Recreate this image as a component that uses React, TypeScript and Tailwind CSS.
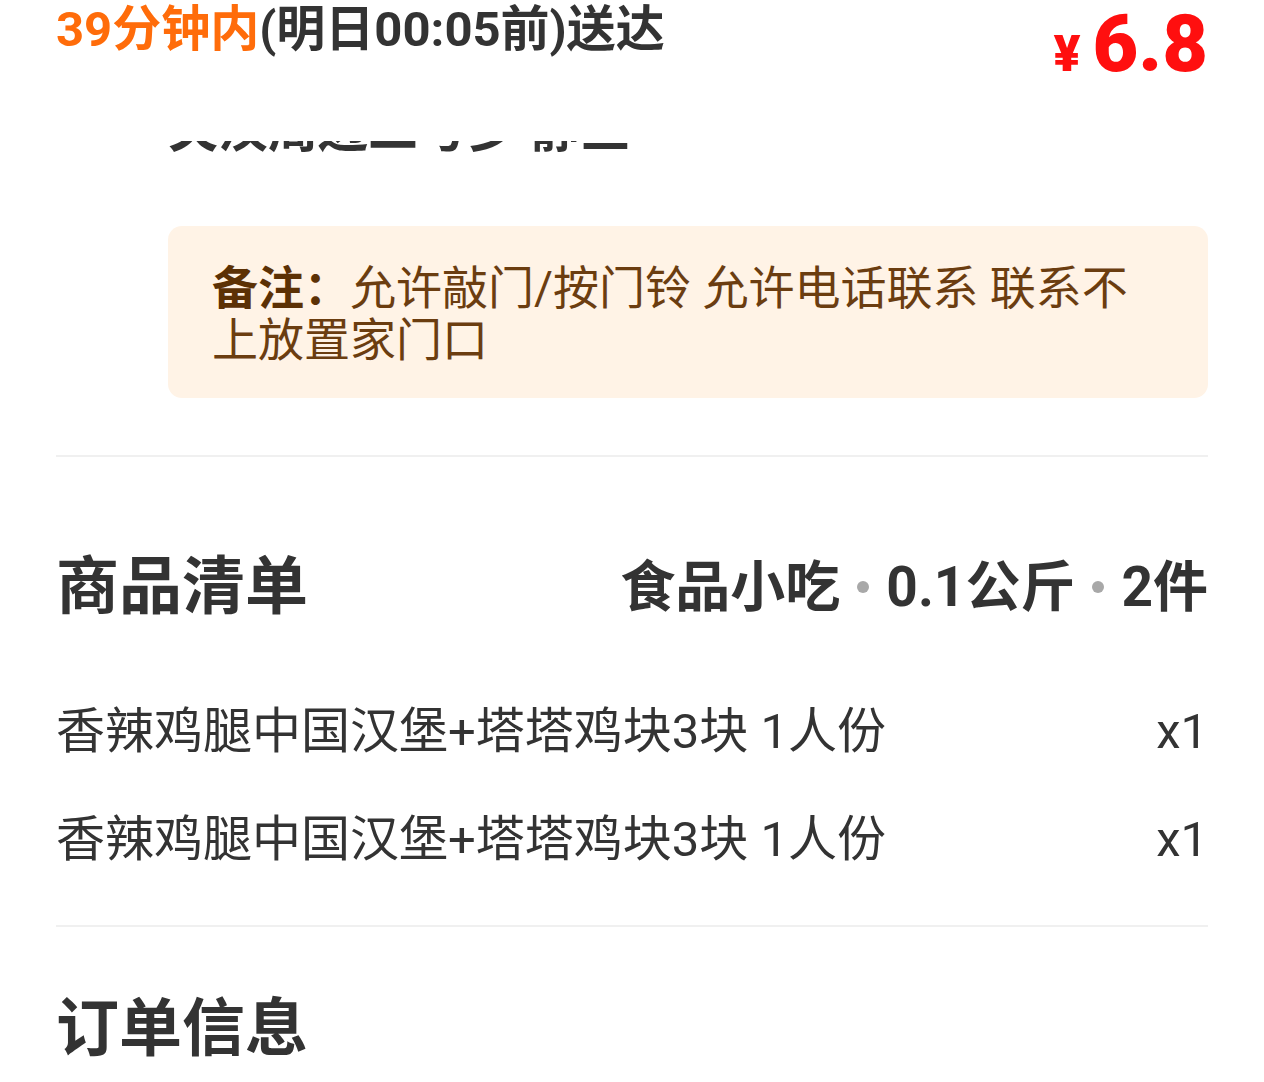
const items = [
  { name: "香辣鸡腿中国汉堡+塔塔鸡块3块 1人份", qty: 1 },
  { name: "香辣鸡腿中国汉堡+塔塔鸡块3块 1人份", qty: 1 },
];

function Dot() {
  return <span className="mx-[17px] inline-block h-[12px] w-[12px] rounded-full bg-[#a8a8a8]" />;
}

export default function App() {
  return (
    <div className="h-[1082px] w-[1264px] overflow-hidden bg-white font-['Roboto','Noto_Sans_CJK_SC',sans-serif] text-[#333333]">
      <div className="px-14">
        {/* sticky header: delivery time + fee */}
        <div className="flex h-[141px] items-start justify-between">
          <div className="mt-0 text-[49px] font-bold leading-[60px]">
            <span className="text-[#ff6c0a]">39分钟内</span>(明日00:05前)送达
          </div>
          <div className="mt-[4px] flex items-baseline font-black text-[#ff0f0f]">
            <span className="text-[50px] leading-none">¥</span>
            <span className="ml-[12px] text-[79px] leading-[80px]">6.8</span>
          </div>
        </div>

        {/* address scrolled under the header */}
        <div className="ml-[112px] h-[13px] overflow-hidden">
          <div className="-mt-[41px] whitespace-nowrap text-[50px] font-bold leading-[60px]">
            关汉周边二号步 静三
          </div>
        </div>

        <div className="ml-[112px] mt-[72px] rounded-[14px] bg-[#fff3e6] px-11 pb-[32px] pt-[36px] text-[46px] leading-[52px] text-[#6b3d10]">
          <span className="font-bold text-[#5c3105]">备注：</span>
          允许敲门/按门铃 允许电话联系 联系不上放置家门口
        </div>

        <div className="mt-[57px] h-[2px] bg-[#f0f0f0]" />

        <div className="mt-[90px] flex items-center justify-between">
          <h2 className="text-[63px] font-bold leading-[80px]">商品清单</h2>
          <div className="flex items-center text-[55px] font-bold leading-[80px]">
            食品小吃
            <Dot />
            0.1公斤
            <Dot />
            2件
          </div>
        </div>

        <div className="mt-[51px]">
          {items.map((item, i) => (
            <div key={i} className="flex h-[108px] items-center justify-between text-[49px]">
              <span>{item.name}</span>
              <span>x{item.qty}</span>
            </div>
          ))}
        </div>

        <div className="mt-[31px] h-[2px] bg-[#f0f0f0]" />

        <h2 className="mt-[62px] text-[63px] font-bold leading-[80px]">订单信息</h2>
      </div>
    </div>
  );
}
